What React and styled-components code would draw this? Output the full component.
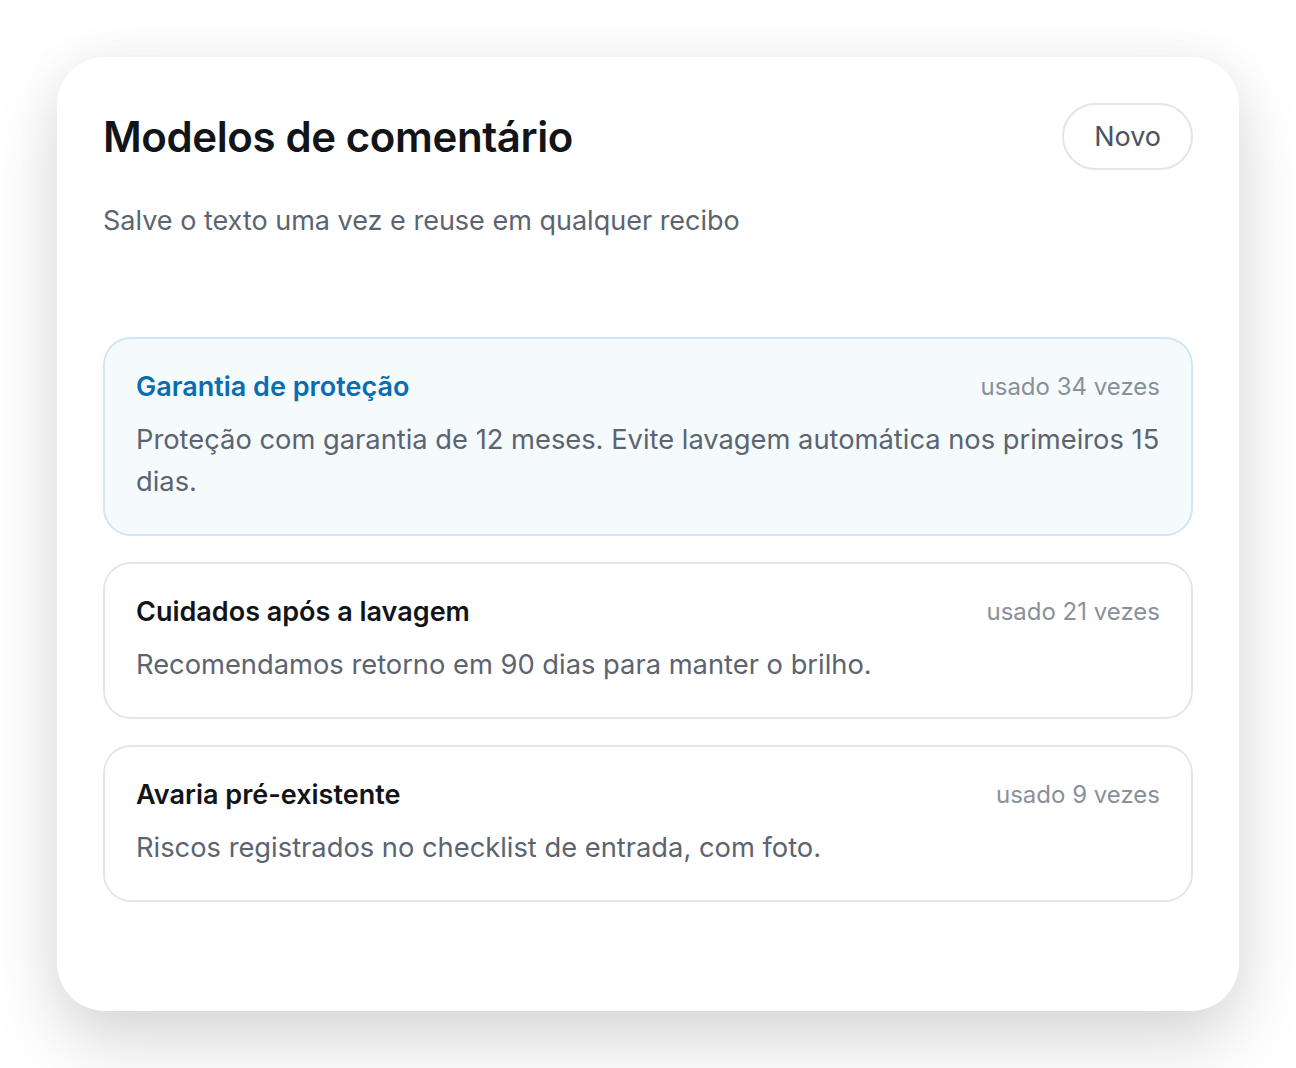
import styled, { createGlobalStyle } from "styled-components";

const GlobalStyle = createGlobalStyle`
  * { box-sizing: border-box; }
  body {
    margin: 0;
    background: #ffffff;
    font-family: Inter, "Noto Sans", sans-serif;
  }
`;

const Page = styled.div`
  padding: 57px;
`;

const Card = styled.div`
  height: 954px;
  background: #ffffff;
  border-radius: 48px;
  padding: 46px;
  box-shadow: 0 34px 70px rgba(0, 0, 0, 0.14), 0 0 50px rgba(0, 0, 0, 0.05);
`;

const Header = styled.div`
  display: flex;
  justify-content: space-between;
  align-items: center;
`;

const Title = styled.h1`
  margin: 0;
  font-size: 42px;
  font-weight: 600;
  letter-spacing: -0.4px;
  color: #111418;
`;

const NewButton = styled.button`
  height: 67px;
  padding: 0 30px;
  border: 2px solid #e3e5e8;
  border-radius: 999px;
  background: #ffffff;
  font-family: inherit;
  font-size: 27px;
  color: #4b5360;
  cursor: pointer;
`;

const Subtitle = styled.p`
  margin: 33px 0 0;
  font-size: 27px;
  line-height: 36px;
  color: #5b6470;
`;

const List = styled.div`
  display: flex;
  flex-direction: column;
  gap: 26px;
  margin-top: 98px;
`;

const Item = styled.div`
  padding: 30px 31px 31px;
  border: 2px solid ${(p) => (p.$active ? "#d0e7f6" : "#e4e6e9")};
  border-radius: 28px;
  background: ${(p) => (p.$active ? "#f5fafd" : "#ffffff")};
`;

const ItemHead = styled.div`
  display: flex;
  justify-content: space-between;
  align-items: center;
  height: 34px;
`;

const ItemTitle = styled.span`
  font-size: 27px;
  font-weight: 600;
  color: ${(p) => (p.$active ? "#0a6db0" : "#111418")};
`;

const Uses = styled.span`
  font-size: 24px;
  color: #8a9099;
`;

const ItemText = styled.p`
  margin: 16px 0 0;
  font-size: 27.3px;
  line-height: 42px;
  color: #5b6470;
`;

const templates = [
  {
    title: "Garantia de proteção",
    uses: 34,
    text: "Proteção com garantia de 12 meses. Evite lavagem automática nos primeiros 15 dias.",
    active: true,
  },
  {
    title: "Cuidados após a lavagem",
    uses: 21,
    text: "Recomendamos retorno em 90 dias para manter o brilho.",
  },
  {
    title: "Avaria pré-existente",
    uses: 9,
    text: "Riscos registrados no checklist de entrada, com foto.",
  },
];

const App = () => {
  return (
    <Page>
      <GlobalStyle />
      <Card>
        <Header>
          <Title>Modelos de comentário</Title>
          <NewButton>Novo</NewButton>
        </Header>
        <Subtitle>Salve o texto uma vez e reuse em qualquer recibo</Subtitle>
        <List>
          {templates.map((t) => (
            <Item key={t.title} $active={t.active}>
              <ItemHead>
                <ItemTitle $active={t.active}>{t.title}</ItemTitle>
                <Uses>usado {t.uses} vezes</Uses>
              </ItemHead>
              <ItemText>{t.text}</ItemText>
            </Item>
          ))}
        </List>
      </Card>
    </Page>
  );
};

export default App;
